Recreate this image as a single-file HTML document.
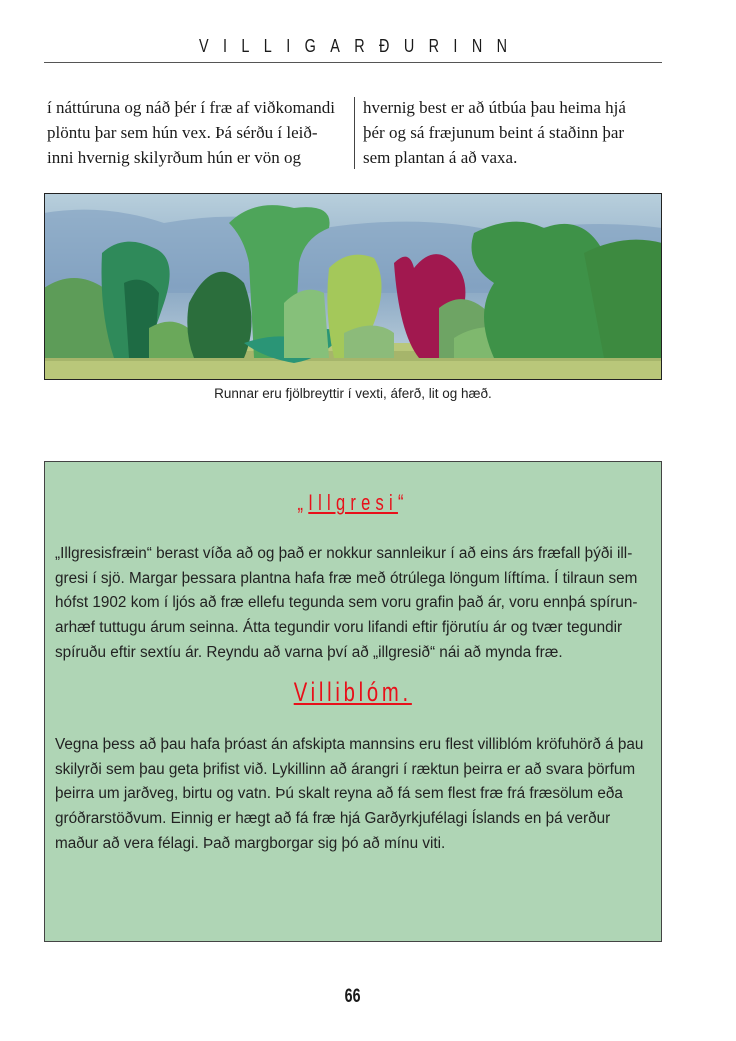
<!DOCTYPE html>
<html><head><meta charset="utf-8"><style>
body{margin:0;width:736px;height:1041px;background:#fff;position:relative;font-family:"Liberation Sans",sans-serif;color:#1a1a1a;overflow:hidden}
.a{position:absolute}
.hdr{left:44px;width:618px;top:36px;text-align:center;font-size:18px;letter-spacing:18px;transform:scaleX(.8);transform-origin:center;text-indent:18px}
.col{font-family:"Liberation Serif",serif;font-size:17px;line-height:25px;top:95px;white-space:nowrap}
.box{left:44px;top:461px;width:616px;height:479px;background:#afd5b5;border:1px solid #444}
.p{position:absolute;left:10px;width:600px;font-size:15.3px;line-height:24.7px;white-space:nowrap;color:#222}
.t{position:absolute;width:616px;text-align:center;color:#e8101a}
</style></head><body>
<div class="a hdr">VILLIGARÐURINN</div>
<div class="a" style="left:44px;top:62px;width:618px;height:1px;background:#555"></div>
<div class="a col" style="left:47px">í náttúruna og náð þér í fræ af viðkomandi<br>plöntu þar sem hún vex. Þá sérðu í leið-<br>inni hvernig skilyrðum hún er vön og</div>
<div class="a" style="left:354px;top:97px;width:1px;height:72px;background:#444"></div>
<div class="a col" style="left:363px">hvernig best er að útbúa þau heima hjá<br>þér og sá fræjunum beint á staðinn þar<br>sem plantan á að vaxa.</div>
<svg class="a" style="left:44px;top:193px" width="618" height="187" viewBox="0 0 618 187">
<defs><linearGradient id="s" x1="0" y1="0" x2="0" y2="1"><stop offset="0" stop-color="#b8cfdc"/><stop offset=".5" stop-color="#8aa8c4"/><stop offset="1" stop-color="#c8d8e0"/></linearGradient></defs>
<rect width="618" height="187" fill="url(#s)"/>
<path d="M0 20 Q60 10 120 30 Q200 15 280 35 Q380 20 460 40 Q540 25 618 35 L618 100 L0 100Z" fill="#7f9fc0" opacity=".6"/>
<rect y="150" width="618" height="37" fill="#b9c77a"/>
<rect y="158" width="618" height="10" fill="#9aa860" opacity=".6"/>
<path d="M0 95 Q30 75 60 95 Q80 110 70 165 L0 165Z" fill="#5d9c58"/>
<path d="M58 60 Q80 40 110 55 Q135 65 120 110 Q110 140 100 165 L70 165 Q55 120 58 60Z" fill="#2f8a5a"/>
<path d="M80 90 Q100 80 115 100 L110 165 L85 165Z" fill="#1e6b44"/>
<path d="M105 135 Q130 120 150 140 L150 165 L105 165Z" fill="#6aa85a"/>
<path d="M145 110 Q170 60 200 90 Q215 130 200 165 L150 165 Q140 140 145 110Z" fill="#2b6e3c"/>
<path d="M185 30 Q210 5 250 15 Q290 10 285 35 Q260 45 255 70 L250 165 L210 165 L205 70 Q200 45 185 30Z" fill="#4ea55a"/>
<path d="M200 150 Q230 140 250 145 Q280 130 300 140 Q280 165 250 170 Q220 165 200 150Z" fill="#2a9576"/>
<path d="M240 110 Q260 90 280 100 L285 165 L240 165Z" fill="#86c07a"/>
<path d="M285 75 Q305 55 330 65 Q345 90 330 130 L315 165 L290 165 Q280 120 285 75Z" fill="#a4c85a"/>
<path d="M300 140 Q330 125 350 140 L350 165 L300 165Z" fill="#8cbb7a"/>
<path d="M350 70 Q365 55 370 75 Q390 50 410 70 Q430 90 415 130 Q410 160 400 165 L375 165 Q355 140 350 70Z" fill="#a1184f"/>
<path d="M395 115 Q420 95 445 120 Q460 140 445 165 L395 165Z" fill="#6ea464"/>
<path d="M410 145 Q440 125 490 140 L490 165 L410 165Z" fill="#7fb86e"/>
<path d="M430 40 Q470 20 500 35 Q540 20 560 60 Q580 80 575 165 L450 165 Q430 120 450 90 Q420 70 430 40Z" fill="#3e9248"/>
<path d="M540 60 Q580 40 618 50 L618 165 L560 165Z" fill="#3d8a40"/>
<rect x=".5" y=".5" width="617" height="186" fill="none" stroke="#222"/>
</svg>
<div class="a" style="left:44px;width:618px;top:386px;text-align:center;font-size:13.5px;color:#222">Runnar eru fjölbreyttir í vexti, áferð, lit og hæð.</div>
<div class="a box">
<div class="t" style="top:28px;font-size:22px;letter-spacing:7px"><span style="display:inline-block;transform:scaleX(.75)">„<u>Illgresi</u>“</span></div>
<div class="p" style="top:80px">„Illgresisfræin“ berast víða að og það er nokkur sannleikur í að eins árs fræfall þýði ill-<br>gresi í sjö. Margar þessara plantna hafa fræ með ótrúlega löngum líftíma. Í tilraun sem<br>hófst 1902 kom í ljós að fræ ellefu tegunda sem voru grafin það ár, voru ennþá spírun-<br>arhæf tuttugu árum seinna. Átta tegundir voru lifandi eftir fjörutíu ár og tvær tegundir<br>spíruðu eftir sextíu ár. Reyndu að varna því að „illgresið“ nái að mynda fræ.</div>
<div class="t" style="top:215px;font-size:27px;letter-spacing:5px"><span style="display:inline-block;transform:scaleX(.75)"><u>Villiblóm.</u></span></div>
<div class="p" style="top:271px">Vegna þess að þau hafa þróast án afskipta mannsins eru flest villiblóm kröfuhörð á þau<br>skilyrði sem þau geta þrifist við. Lykillinn að árangri í ræktun þeirra er að svara þörfum<br>þeirra um jarðveg, birtu og vatn. Þú skalt reyna að fá sem flest fræ frá fræsölum eða<br>gróðrarstöðvum. Einnig er hægt að fá fræ hjá Garðyrkjufélagi Íslands en þá verður<br>maður að vera félagi. Það margborgar sig þó að mínu viti.</div>
</div>
<div class="a" style="left:0;width:706px;top:986px;text-align:center;font-size:19px;font-weight:bold"><span style="display:inline-block;transform:scaleX(.75)">66</span></div>
</body></html>
